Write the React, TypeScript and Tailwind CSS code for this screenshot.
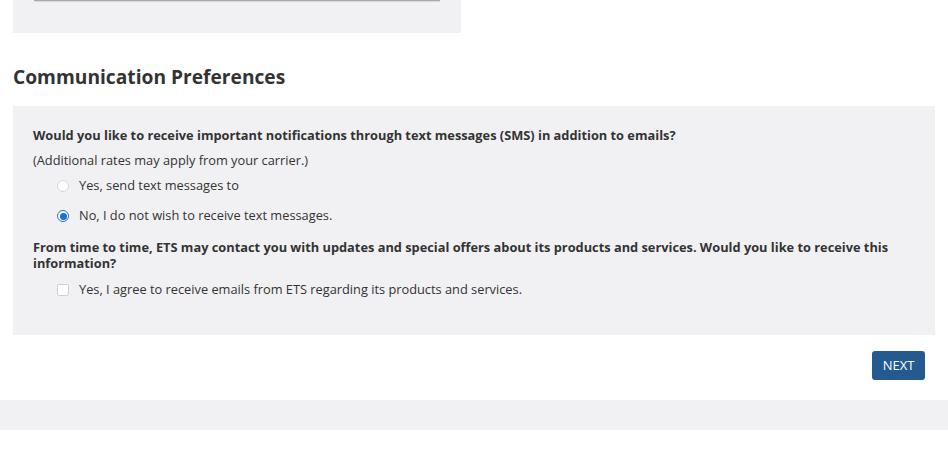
export default function App() {
  return (
    <div className="w-[948px] h-[464px] bg-white overflow-hidden text-[#333] font-['Open_Sans',sans-serif]">
      <div className="px-[13px]">
        {/* tail of previous section */}
        <div className="w-[448px] h-[33px] bg-[#f1f1f3] px-[21px]">
          <div className="h-[1px] bg-[#a9a9ab] shadow-[0_1px_1px_rgba(0,0,0,0.12)]" />
        </div>

        <h2 className="mt-[31px] text-[19.2px] leading-[26px] font-bold text-[#333]">Communication Preferences</h2>

        <div className="mt-[16px] bg-[#f1f1f3] h-[229px] px-[20px] pt-[20px]">
          <p className="text-[12.8px] leading-[18px] font-bold">
            Would you like to receive important notifications through text messages (SMS) in addition to emails?
          </p>
          <p className="mt-[7px] text-[12.8px] leading-[18px]">(Additional rates may apply from your carrier.)</p>

          <label className="mt-[8px] ml-[24px] flex items-center gap-[10px] h-[18px] text-[12.8px]">
            <span className="w-[12px] h-[12px] rounded-full bg-white border border-[#d4d4d6]" />
            Yes, send text messages to
          </label>
          <label className="mt-[12px] ml-[24px] flex items-center gap-[10px] h-[18px] text-[12.8px]">
            <span className="w-[12px] h-[12px] rounded-full bg-white border border-[#1f6fd1] flex items-center justify-center">
              <span className="w-[7px] h-[7px] rounded-full bg-[#1f6fd1]" />
            </span>
            No, I do not wish to receive text messages.
          </label>

          <p className="mt-[14px] text-[12.8px] leading-[16px] font-bold">
            From time to time, ETS may contact you with updates and special offers about its products and services. Would you like to receive this information?
          </p>
          <label className="mt-[10px] ml-[24px] flex items-center gap-[10px] h-[18px] text-[12.8px]">
            <span className="w-[12px] h-[12px] rounded-[2px] bg-white border border-[#cfcfd1]" />
            Yes, I agree to receive emails from ETS regarding its products and services.
          </label>
        </div>

        <div className="flex justify-end mt-[16px] w-[912px]">
          <button className="w-[53px] h-[29px] rounded-[3px] bg-[#245a90] text-white text-[13px] leading-none">NEXT</button>
        </div>
      </div>

      <div className="mt-[20px] h-[30px] bg-[#f1f1f3]" />
    </div>
  )
}
